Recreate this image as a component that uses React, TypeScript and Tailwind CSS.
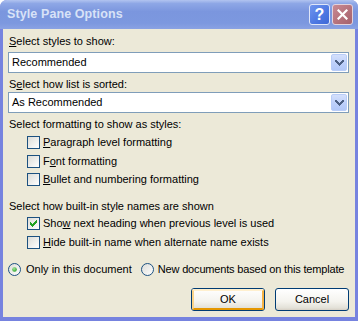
import React from "react";

const font = { fontFamily: '"Liberation Sans", Arial, sans-serif' };

function Check({ checked }: { checked?: boolean }) {
  return (
    <div className="w-[13px] h-[13px] border border-[#1c5180] bg-[linear-gradient(135deg,#dcdcd7_0%,#ffffff_100%)] flex items-center justify-center shrink-0">
      {checked && (
        <svg width="7" height="7" viewBox="0 0 7 7" shapeRendering="crispEdges">
          <path fill="#21a121" d="M6 0h1v1H6zM5 1h2v1H5zM0 2h1v1H0zM4 2h3v1H4zM0 3h2v1H0zM3 3h3v1H3zM0 4h5v1H0zM1 5h3v1H1zM2 6h1v1H2z" />
        </svg>
      )}
    </div>
  );
}

function Radio({ checked }: { checked?: boolean }) {
  return (
    <svg width="13" height="13" viewBox="0 0 13 13" className="shrink-0">
      <defs>
        <linearGradient id="rg" x1="0" y1="0" x2="1" y2="1">
          <stop offset="0" stopColor="#dcdcd7" />
          <stop offset="1" stopColor="#ffffff" />
        </linearGradient>
        <radialGradient id="dot" cx="0.4" cy="0.35" r="0.7">
          <stop offset="0" stopColor="#a6e69c" />
          <stop offset="1" stopColor="#21a121" />
        </radialGradient>
      </defs>
      <circle cx="6.5" cy="6.5" r="6" fill="url(#rg)" stroke="#1c5180" strokeWidth="1" />
      {checked && <circle cx="6.5" cy="6.5" r="2.3" fill="url(#dot)" />}
    </svg>
  );
}

function Combo({ value }: { value: string }) {
  return (
    <div className="ml-[5px] w-[341px] h-[21px] border border-[#7f9db9] bg-white flex items-center">
      <span className="flex-1 pl-[3px] text-[11px] leading-[13px] text-black">{value}</span>
      <div className="w-[16px] h-[17px] mr-[1px] rounded-[2px] border border-[#b9cdf8] bg-[linear-gradient(180deg,#d4e0fc_0%,#bccffa_60%,#b2c8f8_100%)] flex items-center justify-center">
        <svg width="9" height="6" viewBox="0 0 9 6" shapeRendering="crispEdges">
          <path fill="#4d6185" d="M0 0h2v1H0zM7 0h2v1H7zM0 1h3v1H0zM6 1h3v1H6zM1 2h3v1H1zM5 2h3v1H5zM2 3h5v1H2zM3 4h3v1H3zM4 5h1v1H4z" />
        </svg>
      </div>
    </div>
  );
}

function Btn({ label, def }: { label: string; def?: boolean }) {
  return (
    <div className="w-[74px] h-[23px] rounded-[3px] border border-[#003c74] bg-[linear-gradient(180deg,#ffffff_0%,#f4f3ee_60%,#e3e1d8_90%,#d6d0c5_100%)] flex">
      <div
        className={
          def
            ? "flex-1 rounded-[2px] border-2 border-t-[#fff0cf] border-l-[#fbd48a] border-r-[#f5b243] border-b-[#e59700] flex items-center justify-center"
            : "flex-1 flex items-center justify-center"
        }
      >
        <span className="text-[11px] leading-[13px] text-black">{label}</span>
      </div>
    </div>
  );
}

export default function App() {
  return (
    <div style={font} className="w-[358px] h-[321px] flex flex-col rounded-t-[7px] overflow-hidden bg-[#7683df] select-none">
      {/* title bar */}
      <div className="h-[29px] shrink-0 flex items-center bg-[linear-gradient(180deg,#b2c4f0_0%,#8ea7e6_12%,#7b96de_40%,#7c98df_80%,#8aa2e3_100%)] pl-[7px] pr-[5px]">
        <span className="flex-1 text-[12.5px] font-bold text-[#d8e2f7] tracking-[0.1px]">Style Pane Options</span>
        <div className="w-[21px] h-[21px] rounded-[3px] border border-[#dfe6f8] bg-[linear-gradient(135deg,#6f95ee_0%,#4c77e2_60%,#3f68d6_100%)] flex items-center justify-center">
          <span className="text-white font-bold text-[16px] leading-none">?</span>
        </div>
        <div className="w-[21px] h-[21px] ml-[2px] rounded-[3px] border border-[#e2d2dc] bg-[linear-gradient(135deg,#c98a93_0%,#b3707a_60%,#a5626d_100%)] flex items-center justify-center">
          <svg width="11" height="11" viewBox="0 0 11 11">
            <path d="M1.5 1.5L9.5 9.5M9.5 1.5L1.5 9.5" stroke="#ffffff" strokeWidth="2.2" strokeLinecap="square" />
          </svg>
        </div>
      </div>
      {/* client */}
      <div className="flex-1 mx-[3px] mb-[4px] bg-[#ece9d8] flex flex-col text-[11px] leading-[13px] text-black">
        <div className="mt-[6px] ml-[6px]">
          <u>S</u>elect styles to show:
        </div>
        <div className="mt-[4px]">
          <Combo value="Recommended" />
        </div>
        <div className="mt-[5px] ml-[6px]">
          S<u>e</u>lect how list is sorted:
        </div>
        <div className="mt-[1px]">
          <Combo value="As Recommended" />
        </div>
        <div className="mt-[5px] ml-[6px]">Select formatting to show as styles:</div>
        <div className="mt-[5px] ml-[24px] flex items-center gap-[3px]">
          <Check />
          <span><u>P</u>aragraph level formatting</span>
        </div>
        <div className="mt-[6px] ml-[24px] flex items-center gap-[3px]">
          <Check />
          <span>F<u>o</u>nt formatting</span>
        </div>
        <div className="mt-[5px] ml-[24px] flex items-center gap-[3px]">
          <Check />
          <span><u>B</u>ullet and numbering formatting</span>
        </div>
        <div className="mt-[14px] ml-[6px]">Select how built-in style names are shown</div>
        <div className="mt-[4px] ml-[24px] flex items-center gap-[3px]">
          <Check checked />
          <span>Sho<u>w</u> next heading when previous level is used</span>
        </div>
        <div className="mt-[6px] ml-[24px] flex items-center gap-[3px]">
          <Check />
          <span><u>H</u>ide built-in name when alternate name exists</span>
        </div>
        <div className="mt-[14px] ml-[5px] flex items-center">
          <Radio checked />
          <span className="ml-[5px]">Only in this document</span>
          <div className="ml-[9px]">
            <Radio />
          </div>
          <span className="ml-[4px] tracking-[-0.17px]">New documents based on this template</span>
        </div>
        <div className="mt-[12px] flex justify-end gap-[10px] pr-[6px]">
          <Btn label="OK" def />
          <Btn label="Cancel" />
        </div>
      </div>
    </div>
  );
}
